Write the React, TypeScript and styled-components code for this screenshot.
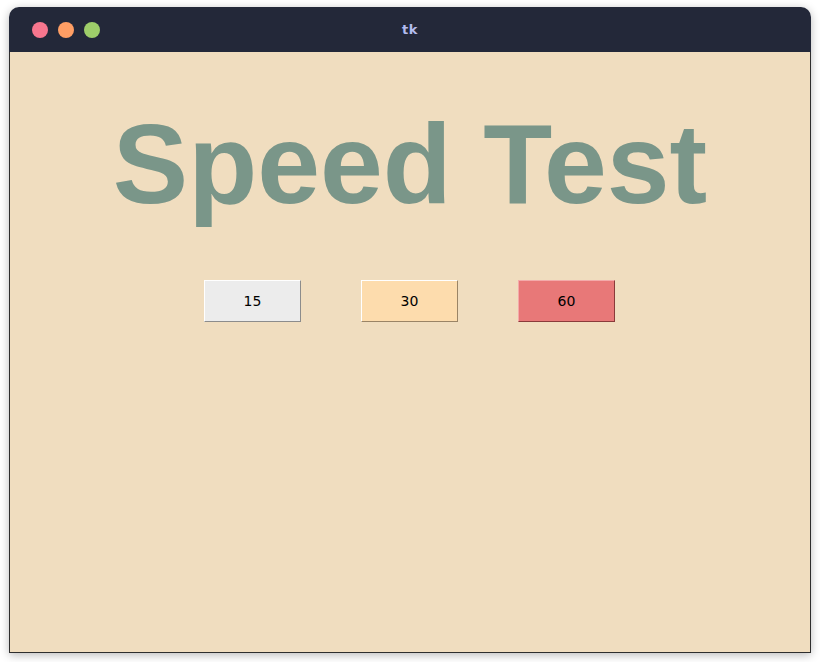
import React, {FC} from "react";
import styled, {createGlobalStyle} from "styled-components";

const GlobalStyle = createGlobalStyle`
  html, body {
    margin: 0;
    padding: 0;
    background: #ffffff;
  }
  body {
    padding: 7px 9px 9px 9px;
    font-family: "DejaVu Sans", sans-serif;
  }
`;

const Window = styled.div`
  width: 802px;
  height: 646px;
  display: flex;
  flex-direction: column;
  border-radius: 10px 10px 0 0;
  box-shadow: 0 2px 10px rgba(0, 0, 0, 0.28);
  overflow: hidden;
`;

const TitleBar = styled.div`
  position: relative;
  height: 45px;
  flex: none;
  background: #232839;
  display: flex;
  align-items: center;
  justify-content: center;
`;

const Lights = styled.div`
  position: absolute;
  left: 23px;
  top: 15px;
  display: flex;
  gap: 10px;
`;

const Light = styled.span<{ $color: string }>`
  width: 16px;
  height: 16px;
  border-radius: 50%;
  background: ${p => p.$color};
`;

const Title = styled.div`
  color: #b3bcef;
  font-family: "DejaVu Sans", sans-serif;
  font-weight: bold;
  font-size: 13px;
  letter-spacing: 0.5px;
`;

const Content = styled.div`
  flex: 1;
  background: #f0ddbf;
  border: 1px solid #2e2e2e;
  border-top: none;
  display: flex;
  flex-direction: column;
  align-items: center;
`;

const Heading = styled.h1`
  margin: 47px 0 0 0;
  font-family: "Liberation Sans", Arial, sans-serif;
  font-weight: bold;
  font-size: 113px;
  line-height: normal;
  color: #7a9689;
  white-space: nowrap;
`;

const ButtonRow = styled.div`
  margin: 51px 1px 0 0;
  display: flex;
  gap: 60px;
`;

const TimeButton = styled.button<{ $bg: string; $light: string; $dark: string }>`
  width: 97px;
  height: 42px;
  box-sizing: border-box;
  padding: 0;
  background: ${p => p.$bg};
  border: 1px solid;
  border-color: ${p => p.$light} ${p => p.$dark} ${p => p.$dark} ${p => p.$light};
  font-family: "DejaVu Sans", sans-serif;
  font-size: 14px;
  color: #000000;
  cursor: pointer;
`;

const buttons = [
  {label: "15", bg: "#ececec", light: "#ffffff", dark: "#8c8c8c"},
  {label: "30", bg: "#fddcad", light: "#ffffff", dark: "#9a8466"},
  {label: "60", bg: "#e87878", light: "#f4aaaa", dark: "#8a3a3a"},
];

const App: FC = () => {
  return (
    <>
      <GlobalStyle/>
      <Window>
        <TitleBar>
          <Lights>
            <Light $color="#f7768e"/>
            <Light $color="#ff9e64"/>
            <Light $color="#9ece6a"/>
          </Lights>
          <Title>tk</Title>
        </TitleBar>
        <Content>
          <Heading>Speed Test</Heading>
          <ButtonRow>
            {buttons.map(b => (
              <TimeButton key={b.label} $bg={b.bg} $light={b.light} $dark={b.dark}>{b.label}</TimeButton>
            ))}
          </ButtonRow>
        </Content>
      </Window>
    </>
  )
};

export default App;
